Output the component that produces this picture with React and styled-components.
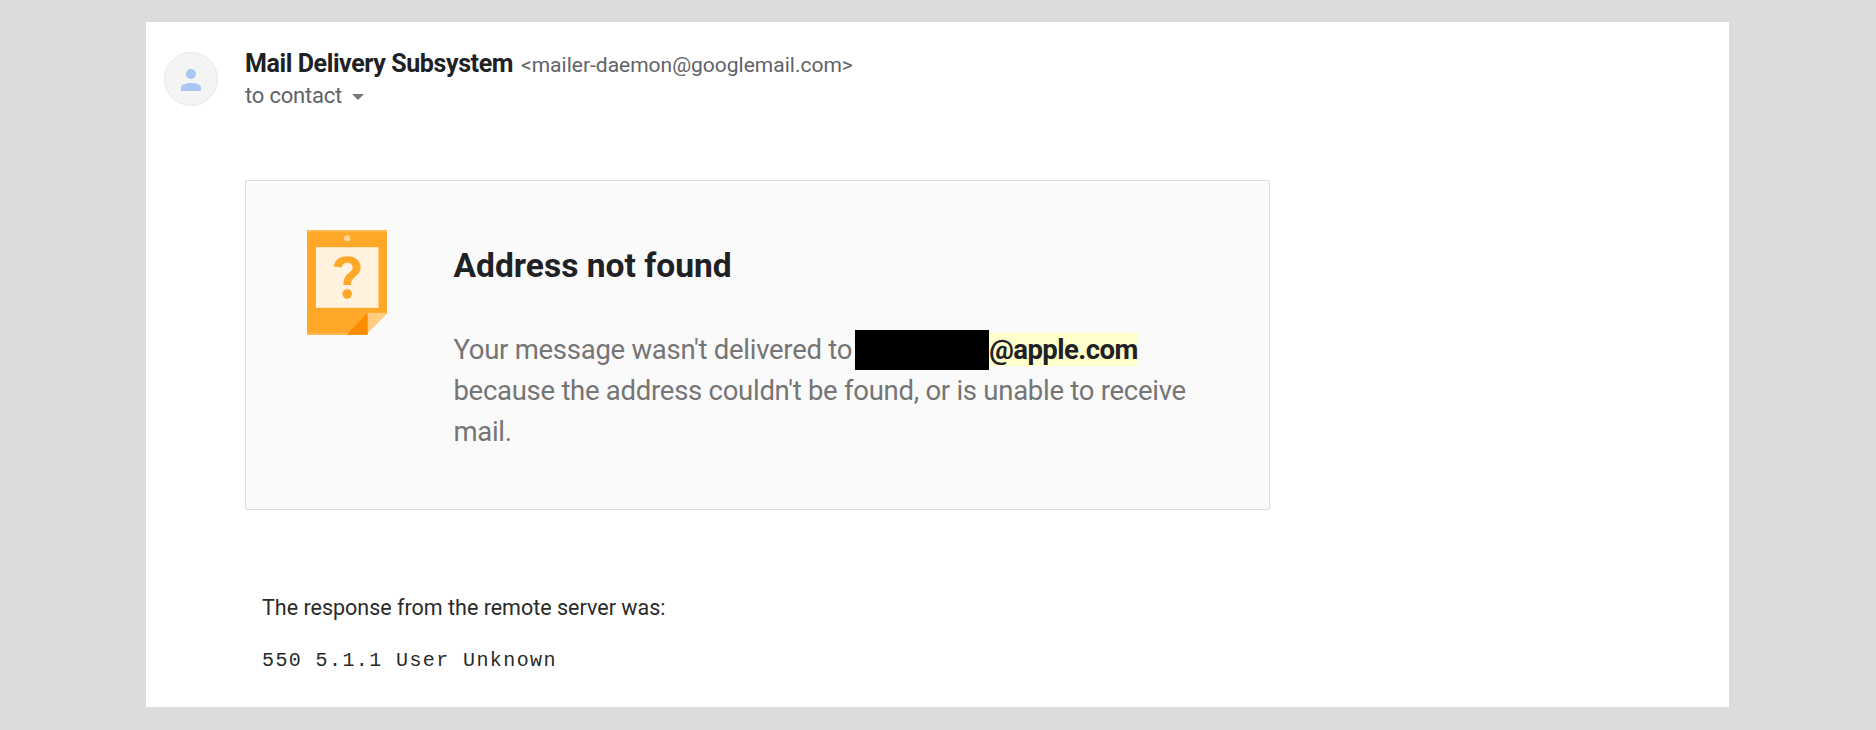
import React from 'react';
import styled, { createGlobalStyle } from 'styled-components';

const GlobalStyle = createGlobalStyle`
  html, body {
    margin: 0;
    padding: 0;
    background: #dcdcdc;
  }
`;

const Page = styled.div`
  width: 1876px;
  height: 730px;
  box-sizing: border-box;
  padding: 22px 147px 23px 146px;
  background: #dcdcdc;
  overflow: hidden;
`;

const Sheet = styled.main`
  height: 100%;
  box-sizing: border-box;
  padding: 30px 18px 0;
  background: #fff;
  font-family: Roboto, "Liberation Sans", sans-serif;
`;

const Header = styled.header`
  display: flex;
  gap: 27px;
  height: 56px;
`;

const Avatar = styled.div`
  width: 54px;
  height: 54px;
  box-sizing: border-box;
  display: flex;
  align-items: center;
  justify-content: center;
  padding-top: 2px;
  border: 1px solid #e6e8ee;
  border-radius: 50%;
  background: #f4f4f5;
`;

const FromLine = styled.div`
  display: flex;
  align-items: baseline;
  gap: 8px;
  height: 23px;
  line-height: 23px;
`;

const Name = styled.span`
  font-size: 25px;
  font-weight: 700;
  letter-spacing: -0.4px;
  color: #202124;
`;

const Address = styled.span`
  font-size: 21px;
  color: #5f6368;
`;

const ToLine = styled.div`
  display: flex;
  align-items: center;
  gap: 10px;
  height: 23px;
  margin-top: 9px;
  font-size: 22px;
  letter-spacing: -0.2px;
  color: #5f6368;
`;

const Caret = styled.span`
  width: 0;
  height: 0;
  margin-top: 2px;
  border-left: 6px solid transparent;
  border-right: 6px solid transparent;
  border-top: 6px solid #777;
`;

const Body = styled.div`
  margin: 72px 0 0 81px;
`;

const Card = styled.section`
  width: 1025px;
  height: 330px;
  box-sizing: border-box;
  display: flex;
  gap: 66px;
  padding: 49px 61px 0;
  border: 1px solid #dedede;
  border-radius: 2px;
  background: #fafafa;
`;

const CardText = styled.div`
  width: 760px;
`;

const Title = styled.h1`
  margin: 16px 0 0;
  font-size: 33.6px;
  line-height: 40px;
  font-weight: 700;
  color: #202124;
`;

const Message = styled.p`
  margin: 43px 0 0;
  font-size: 27.5px;
  line-height: 41px;
  letter-spacing: -0.27px;
  color: #757575;
`;

const Redacted = styled.span`
  display: inline-block;
  width: 134px;
  height: 40px;
  margin-left: 3px;
  vertical-align: -11px;
  background: #000;
`;

const Email = styled.span`
  background: #ffffcc;
  font-weight: 700;
  letter-spacing: -0.55px;
  color: #202124;
`;

const Response = styled.div`
  margin: 85px 0 0 17px;
`;

const ResponseLabel = styled.p`
  margin: 0;
  font-size: 21.5px;
  line-height: 26px;
  color: #2a2a2a;
`;

const ResponseCode = styled.pre`
  margin: 28px 0 0;
  font-family: "Liberation Mono", "Courier New", monospace;
  font-size: 20px;
  line-height: 24px;
  letter-spacing: 1.4px;
  color: #2a2a2a;
`;

const PersonIcon = () => (
  <svg width="20" height="22" viewBox="0 0 20 22" aria-hidden="true">
    <circle cx="10" cy="5" r="5" fill="#a8c7f5" />
    <path d="M0 22v-3.500C0 15.500 4.500 14 10 14s10 1.500 10 4.500V22z" fill="#a8c7f5" />
  </svg>
);

const NoteIcon = () => (
  <svg width="81" height="105" viewBox="0 0 81 105" aria-hidden="true">
    <path d="M0 0h81v83L59 105H0z" fill="#ffa726" />
    <rect x="0" y="0" width="81" height="2" fill="#ffb74d" />
    <rect x="0" y="103" width="61" height="2" fill="#ffb74d" />
    <circle cx="40.500" cy="8" r="3.200" fill="#ffd699" />
    <rect x="9" y="17" width="63" height="61" fill="#fff3e0" />
    <path d="M61 83h20l-22 22h2z" fill="#ffcc80" />
    <path d="M61 83v22H40z" fill="#fb8c00" />
    <path
      d="M27 36.500C27.500 30 33 26 40.500 26 48.500 26 54 30.500 54 37c0 4.700-2.500 7.200-5.500 9.700-3 2.400-4.300 4.300-4.300 8.300h-7.500c0-6 1.800-8.800 5.200-11.700 2.400-2.100 4-3.600 4-6 0-2.900-2.200-4.800-5.400-4.800-3.300 0-5.200 1.900-5.700 5z"
      fill="#ffa726"
    />
    <circle cx="40.500" cy="64" r="4.800" fill="#ffa726" />
  </svg>
);

const App = () => (
  <>
    <GlobalStyle />
    <Page>
      <Sheet>
        <Header>
          <Avatar>
            <PersonIcon />
          </Avatar>
          <div>
            <FromLine>
              <Name>Mail Delivery Subsystem</Name>
              <Address>&lt;mailer-daemon@googlemail.com&gt;</Address>
            </FromLine>
            <ToLine>
              to contact
              <Caret />
            </ToLine>
          </div>
        </Header>
        <Body>
          <Card>
            <NoteIcon />
            <CardText>
              <Title>Address not found</Title>
              <Message>
                Your message wasn't delivered to
                <Redacted />
                <Email>@apple.com</Email>
                <br />
                because the address couldn't be found, or is unable to receive
                <br />
                mail.
              </Message>
            </CardText>
          </Card>
          <Response>
            <ResponseLabel>The response from the remote server was:</ResponseLabel>
            <ResponseCode>550 5.1.1 User Unknown</ResponseCode>
          </Response>
        </Body>
      </Sheet>
    </Page>
  </>
);

export default App;
